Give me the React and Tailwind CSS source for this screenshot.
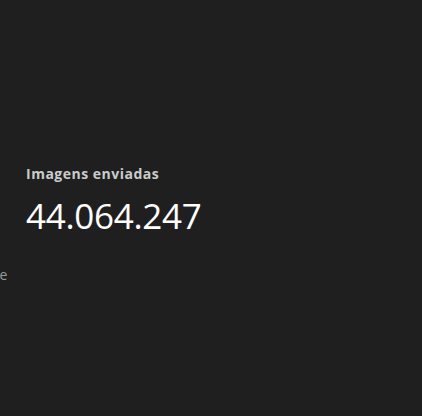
import React from "react";

const stats = [{ label: "Imagens enviadas", value: "44.064.247" }];

export default function App() {
  return (
    <div
      className="w-[422px] h-[416px] bg-[#1f1f1f] overflow-hidden relative"
      style={{ fontFamily: "'Open Sans', Inter, sans-serif" }}
    >
      {/* texto cortado da coluna ao lado */}
      <span className="absolute left-[-9px] top-[264px] text-[14px] text-[#9a9a9a]">
        de
      </span>

      <div className="pt-[164px] pl-[26px] flex flex-col">
        {stats.map((s) => (
          <div key={s.label} className="flex flex-col">
            <span className="text-[14px] font-bold text-[#cccccc] leading-[20px] tracking-[0.5px]">
              {s.label}
            </span>
            <span className="mt-[12px] text-[35px] leading-[40px] text-white tracking-[-0.3px]">
              {s.value}
            </span>
          </div>
        ))}
      </div>
    </div>
  );
}
